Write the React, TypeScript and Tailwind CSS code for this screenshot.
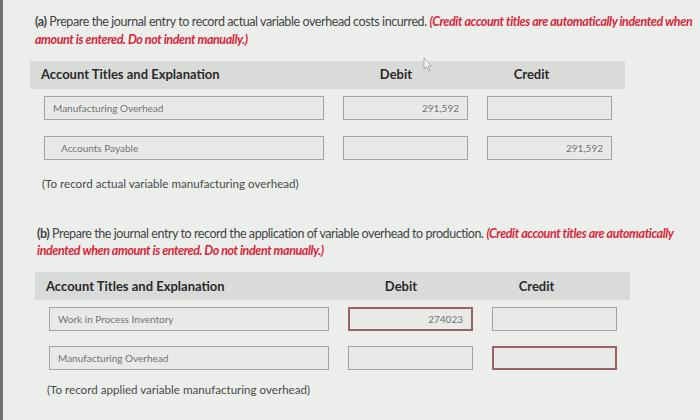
import React from "react";

const font = { fontFamily: "Lato, 'Open Sans', sans-serif" };

function Box({ text, right, red, indent }: { text?: string; right?: boolean; red?: boolean; indent?: boolean }) {
  return (
    <div
      className={
        "h-[24px] flex items-center text-[10px] text-[#727272] bg-[#e8eae8] " +
        (red ? "border-2 border-[#9a6268] " : "border border-[#a3a5a3] ") +
        (right ? "justify-end pr-[8px] " : "justify-start ") +
        (indent ? "pl-[16px]" : "pl-[8px]")
      }
    >
      {text}
    </div>
  );
}

function Table({
  rows,
  note,
  rowGap,
  noteTop,
  cursor,
}: {
  rows: { acct: string; indent?: boolean; debit?: string; credit?: string; redD?: boolean; redC?: boolean }[];
  note: string;
  rowGap: string;
  noteTop: string;
  cursor?: boolean;
}) {
  return (
    <div className="w-[595px]">
      <div className="relative h-[28px] bg-[#d9dbd9] grid grid-cols-[294px_125px_20px_125px] items-center text-[13px] font-bold text-[#2a2a2a]">
        <div className="pl-[11px]">Account Titles and Explanation</div>
        <div className="text-center pl-[19px]">Debit</div>
        <div />
        <div className="text-center">Credit</div>
        {cursor && (
          <svg className="absolute left-[393px] top-[-4px]" width="10" height="15" viewBox="0 0 10 15">
            <path d="M1 1 L1 12 L3.5 9.5 L5.5 14 L7 13.3 L5 9 L8.5 9 Z" fill="#f4f5f4" stroke="#9a9c9a" strokeWidth="0.8" strokeLinejoin="round" />
          </svg>
        )}
      </div>
      <div className={"pl-[14px] pt-[7px] flex flex-col " + rowGap}>
        {rows.map((r, i) => (
          <div key={i} className="grid grid-cols-[280px_125px_125px] gap-x-[19px]">
            <Box text={r.acct} indent={r.indent} />
            <Box text={r.debit} right red={r.redD} />
            <Box text={r.credit} right red={r.redC} />
          </div>
        ))}
      </div>
      <div className={"pl-[12px] text-[11.6px] text-[#4a4a4a] " + noteTop}>{note}</div>
    </div>
  );
}

export default function App() {
  return (
    <div style={font} className="w-[700px] h-[420px] bg-[#eceeec] border-l-[3px] border-[#6f716f] overflow-hidden">
      <div className="pl-[32px] pt-[13px] pr-[4px] text-[12.5px] leading-[18px] text-[#444] tracking-[-0.41px]">
        <span className="font-bold">(a)</span> Prepare the journal entry to record actual variable overhead costs incurred.{" "}
        <span className="text-[#d8263a] italic font-bold">
          (Credit account titles are automatically indented when amount is entered. Do not indent manually.)
        </span>
      </div>
      <div className="pl-[27px] pt-[12px]">
        <Table
          rows={[
            { acct: "Manufacturing Overhead", debit: "291,592" },
            { acct: "Accounts Payable", indent: true, credit: "291,592" },
          ]}
          note="(To record actual variable manufacturing overhead)"
          rowGap="gap-[16px]"
          noteTop="pt-[15px]"
          cursor
        />
      </div>
      <div className="pl-[34px] pt-[33px] pr-[6px] text-[12.5px] leading-[17px] text-[#444] tracking-[-0.43px]">
        <span className="font-bold">(b)</span> Prepare the journal entry to record the application of variable overhead to production.{" "}
        <span className="text-[#d8263a] italic font-bold">
          (Credit account titles are automatically indented when amount is entered. Do not indent manually.)
        </span>
      </div>
      <div className="pl-[32px] pt-[13px]">
        <Table
          rows={[
            { acct: "Work in Process Inventory", debit: "274023", redD: true },
            { acct: "Manufacturing Overhead", redC: true },
          ]}
          note="(To record applied variable manufacturing overhead)"
          rowGap="gap-[15px]"
          noteTop="pt-[11px]"
        />
      </div>
    </div>
  );
}
